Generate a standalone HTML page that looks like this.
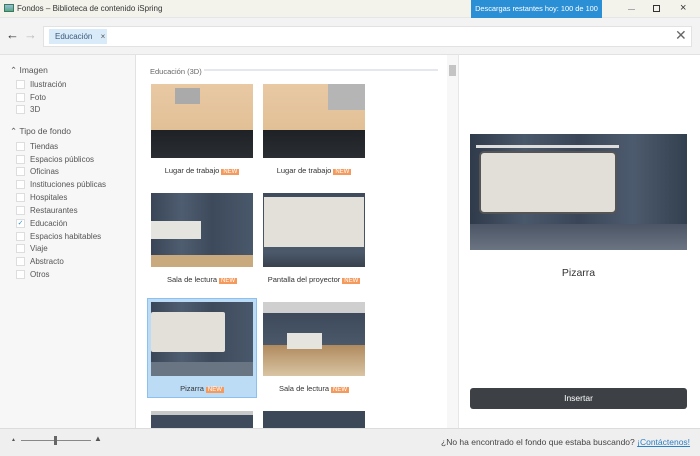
<!DOCTYPE html><html><head><meta charset="utf-8"><style>
*{margin:0;padding:0;box-sizing:border-box}
body{width:700px;height:456px;overflow:hidden;font-family:"Liberation Sans",sans-serif;background:#f3f3f3;position:relative;color:#444;font-size:8px}
.a{position:absolute;white-space:nowrap}
.title{left:0;top:0;width:700px;height:18px;background:#f3f3ec;border-bottom:1px solid #e6e6e6}
.cb{width:9px;height:9px;border:1px solid #ddd;background:#fff;left:16px}
.lbl{left:30px;font-size:8px;color:#555}
.th{width:102px;height:74px}
.desk{background:linear-gradient(#e8c9a4 0,#e2c096 62%,#1e2226 62%,#2a2e33 100%)}
.room{background:linear-gradient(90deg,#3a4658,#4f5d70 30%,#3d4a5c 60%,#4a586b);}
.cap{font-size:7.5px;color:#333;width:102px;text-align:center}
.new{background:#f59a5c;color:#fff;font-size:6px;padding:0 2px;margin-left:2px}
</style></head><body>
<div class="a title"></div>
<div class="a" style="left:4px;top:4px;width:10px;height:8px;border:1px solid #3a7a5a;background:linear-gradient(#9bd,#5a8)"></div>
<div class="a" style="left:17px;top:4px;font-size:8px;color:#333">Fondos – Biblioteca de contenido iSpring</div>
<div class="a" style="left:471px;top:0;width:131px;height:18px;background:#2b8fd5;color:#fff;font-size:7.4px;line-height:18px;text-align:center">Descargas restantes hoy: 100 de 100</div>
<div class="a" style="left:628px;top:9px;width:7px;height:1px;background:#aaa"></div>
<div class="a" style="left:653px;top:5px;width:7px;height:7px;border:1px solid #333"></div>
<div class="a" style="left:680px;top:2px;font-size:11px;color:#333">×</div>
<div class="a" style="left:6px;top:27px;font-size:13px;color:#333">←</div>
<div class="a" style="left:24px;top:27px;font-size:13px;color:#bbb">→</div>
<div class="a" style="left:43px;top:26px;width:649px;height:21px;background:#fff;border:1px solid #e2e2e2"></div>
<div class="a" style="left:49px;top:29px;width:58px;height:15px;background:#d9eaf8;color:#3a5a7a;font-size:8px;line-height:15px;padding-left:6px">Educación <span style="margin-left:6px;color:#555">×</span></div>
<div class="a" style="left:675px;top:27px;font-size:14px;color:#666">✕</div>
<div class="a" style="left:0;top:54px;width:136px;height:374px;background:#f7f7f7;border-top:1px solid #e2e2e2;border-right:1px solid #e2e2e2"></div>
<div class="a" style="left:136px;top:54px;width:322px;height:374px;background:#fff;border-top:1px solid #e2e2e2"></div>
<div class="a" style="left:458px;top:54px;width:242px;height:374px;background:#fff;border-top:1px solid #e2e2e2;border-left:1px solid #e6e6e6"></div>
<div class="a" style="left:10px;top:65px;font-size:8.5px;color:#555">⌃ Imagen</div>
<div class="a cb" style="top:80px"></div><div class="a lbl" style="top:80px">Ilustración</div>
<div class="a cb" style="top:93px"></div><div class="a lbl" style="top:93px">Foto</div>
<div class="a cb" style="top:105px"></div><div class="a lbl" style="top:105px">3D</div>
<div class="a" style="left:10px;top:126px;font-size:8.5px;color:#555">⌃ Tipo de fondo</div>
<div class="a cb" style="top:142px"></div><div class="a lbl" style="top:142px">Tiendas</div>
<div class="a cb" style="top:155px"></div><div class="a lbl" style="top:155px">Espacios públicos</div>
<div class="a cb" style="top:167px"></div><div class="a lbl" style="top:167px">Oficinas</div>
<div class="a cb" style="top:180px"></div><div class="a lbl" style="top:180px">Instituciones públicas</div>
<div class="a cb" style="top:193px"></div><div class="a lbl" style="top:193px">Hospitales</div>
<div class="a cb" style="top:206px"></div><div class="a lbl" style="top:206px">Restaurantes</div>
<div class="a cb" style="top:219px;color:#2b8fd5;font-size:7px;line-height:7px;text-align:center">✓</div><div class="a lbl" style="top:219px">Educación</div>
<div class="a cb" style="top:232px"></div><div class="a lbl" style="top:232px">Espacios habitables</div>
<div class="a cb" style="top:244px"></div><div class="a lbl" style="top:244px">Viaje</div>
<div class="a cb" style="top:257px"></div><div class="a lbl" style="top:257px">Abstracto</div>
<div class="a cb" style="top:270px"></div><div class="a lbl" style="top:270px">Otros</div>
<div class="a" style="left:150px;top:67px;font-size:7.5px;color:#666">Educación (3D)</div>
<div class="a" style="left:204px;top:69px;width:234px;height:2px;background:#e6e6ee"></div>
<div class="a" style="left:447px;top:55px;width:11px;height:373px;background:#f7f7f7"></div>
<div class="a" style="left:449px;top:65px;width:7px;height:11px;background:#c4c4c4"></div>
<div class="a th desk" style="left:151px;top:84px"></div>
<div class="a th desk" style="left:263px;top:84px"></div>
<div class="a" style="left:175px;top:88px;width:25px;height:16px;background:#aaa"></div>
<div class="a" style="left:328px;top:84px;width:37px;height:26px;background:#b5b5b5"></div>
<div class="a cap" style="left:151px;top:166px">Lugar de trabajo<span class="new">NEW</span></div>
<div class="a cap" style="left:263px;top:166px">Lugar de trabajo<span class="new">NEW</span></div>
<div class="a th room" style="left:151px;top:193px"></div>
<div class="a" style="left:151px;top:221px;width:50px;height:18px;background:#e6e4df"></div>
<div class="a" style="left:151px;top:255px;width:102px;height:12px;background:#c9a97e"></div>
<div class="a th room" style="left:263px;top:193px;background:linear-gradient(#3f4c5d,#4b596b 80%,#39414d)"></div>
<div class="a" style="left:264px;top:197px;width:100px;height:50px;background:#e3e0da"></div>
<div class="a cap" style="left:151px;top:275px">Sala de lectura<span class="new">NEW</span></div>
<div class="a cap" style="left:263px;top:275px">Pantalla del proyector<span class="new">NEW</span></div>
<div class="a" style="left:147px;top:298px;width:110px;height:100px;background:#bcdcf6;border:1px solid #8cc0ee"></div>
<div class="a th room" style="left:151px;top:302px"></div>
<div class="a" style="left:151px;top:312px;width:74px;height:40px;background:#e3e0da;border-radius:2px"></div>
<div class="a" style="left:151px;top:362px;width:102px;height:14px;background:#6a7584"></div>
<div class="a th" style="left:263px;top:302px;background:linear-gradient(#cfcfcf 0,#cfcfcf 15%,#3e4a5b 15%,#4a586a 58%,#b08a5e 58%,#d9c4a3 100%)"></div>
<div class="a" style="left:287px;top:333px;width:35px;height:16px;background:#e6e4df"></div>
<div class="a cap" style="left:151px;top:384px">Pizarra<span class="new">NEW</span></div>
<div class="a cap" style="left:263px;top:384px">Sala de lectura<span class="new">NEW</span></div>
<div class="a" style="left:151px;top:411px;width:102px;height:17px;background:linear-gradient(#c9c9c9 0,#c9c9c9 25%,#3f4b5c 25%)"></div>
<div class="a" style="left:263px;top:411px;width:102px;height:17px;background:#3c4757"></div>
<div class="a" style="left:470px;top:134px;width:217px;height:116px;background:linear-gradient(90deg,#2f3a4a,#4a586b 25%,#3a4658 50%,#4d5b6e 75%,#33404f)"></div>
<div class="a" style="left:470px;top:224px;width:217px;height:26px;background:linear-gradient(#4b5565,#6a7482)"></div>
<div class="a" style="left:476px;top:145px;width:143px;height:3px;background:#ddd"></div>
<div class="a" style="left:479px;top:151px;width:138px;height:63px;background:#e2dfd9;border:2px solid #555;border-radius:5px"></div>
<div class="a" style="left:470px;top:267px;width:217px;text-align:center;font-size:10.5px;color:#333">Pizarra</div>
<div class="a" style="left:470px;top:388px;width:217px;height:21px;background:#3d4146;border-radius:3px;color:#fff;font-size:8.5px;line-height:21px;text-align:center">Insertar</div>
<div class="a" style="left:0;top:428px;width:700px;height:28px;background:#efefef;border-top:1px solid #dcdcdc"></div>
<div class="a" style="left:21px;top:440px;width:70px;height:1px;background:#888"></div>
<div class="a" style="left:54px;top:436px;width:3px;height:9px;background:#666"></div>
<div class="a" style="left:11px;top:437px;font-size:5px;color:#555">▲</div>
<div class="a" style="left:94px;top:434px;font-size:8px;color:#555">▲</div>
<div class="a" style="left:441px;top:437px;font-size:8.5px;color:#444">¿No ha encontrado el fondo que estaba buscando? <span style="color:#2b7fc5;text-decoration:underline">¡Contáctenos!</span></div>
</body></html>
